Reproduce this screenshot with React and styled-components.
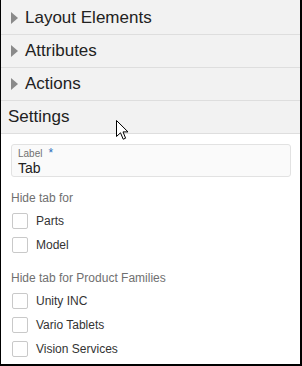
import React from "react";
import styled, { createGlobalStyle } from "styled-components";

const Global = createGlobalStyle`
  body {
    margin: 0;
    background: #fff;
    font-family: "Liberation Sans", Arial, sans-serif;
  }
`;

const Panel = styled.div`
  position: relative;
  width: 302px;
  height: 366px;
  box-sizing: border-box;
  border-left: 1px solid #000;
  border-right: 2px solid #000;
  border-bottom: 2px solid #000;
  background: #fff;
  overflow: hidden;
`;

const Accordion = styled.div`
  background: #f2f2f2;
  padding-top: 2px;
`;

const Header = styled.div`
  display: flex;
  align-items: center;
  gap: 7px;
  height: 32px;
  padding-left: ${(p) => (p.open ? "7px" : "10px")};
  border-bottom: 1px solid #dedede;
  font-size: 17px;
  color: #222;
`;

const Caret = styled.span`
  width: 0;
  height: 0;
  border-left: 7px solid #8a8a8a;
  border-top: 6px solid transparent;
  border-bottom: 6px solid transparent;
`;

const Body = styled.div`
  padding: 10px 9px 0 10px;
`;

const Field = styled.div`
  height: 33px;
  box-sizing: border-box;
  border: 1px solid #e2e2e2;
  border-radius: 3px;
  background: #fafafa;
  padding: 2px 6px 0;
`;

const FieldLabel = styled.div`
  font-size: 10px;
  line-height: 12px;
  color: #707070;
`;

const Required = styled.span`
  font-size: 12px;
  color: #2a6ebb;
  margin-left: 6px;
`;

const FieldValue = styled.div`
  font-size: 14px;
  line-height: 16px;
  color: #222;
`;

const Section = styled.div`
  margin-top: 12px;
`;

const SectionTitle = styled.div`
  height: 18px;
  line-height: 18px;
  margin-bottom: 2px;
  font-size: 12px;
  color: #707070;
`;

const Option = styled.label`
  display: flex;
  align-items: center;
  gap: 8px;
  height: 24px;
  font-size: 12px;
  color: #333;
`;

const Box = styled.span`
  width: 16px;
  height: 16px;
  box-sizing: border-box;
  border: 1px solid #c9c9c9;
  border-radius: 2px;
  background: #fff;
  margin-left: 1px;
`;

const Pointer = styled.svg`
  position: absolute;
  left: 115px;
  top: 120px;
`;

const closed = ["Layout Elements", "Attributes", "Actions"];

const groups = [
  { title: "Hide tab for", items: ["Parts", "Model"] },
  {
    title: "Hide tab for Product Families",
    items: ["Unity INC", "Vario Tablets", "Vision Services"],
  },
];

export default function App() {
  return (
    <>
      <Global />
      <Panel>
        <Accordion>
          {closed.map((t) => (
            <Header key={t}>
              <Caret />
              {t}
            </Header>
          ))}
          <Header open>Settings</Header>
        </Accordion>
        <Body>
          <Field>
            <FieldLabel>
              Label<Required>*</Required>
            </FieldLabel>
            <FieldValue>Tab</FieldValue>
          </Field>
          {groups.map((g) => (
            <Section key={g.title}>
              <SectionTitle>{g.title}</SectionTitle>
              {g.items.map((i) => (
                <Option key={i}>
                  <Box />
                  {i}
                </Option>
              ))}
            </Section>
          ))}
        </Body>
        <Pointer width="13" height="21" viewBox="0 0 13 21">
          <path
            d="M0.5 0.5 L0.5 16.5 L4.5 12.8 L7.2 19.2 L9.6 18.2 L7 11.9 L12 11.9 Z"
            fill="#fff"
            stroke="#000"
            strokeWidth="1"
            strokeLinejoin="miter"
          />
        </Pointer>
      </Panel>
    </>
  );
}
